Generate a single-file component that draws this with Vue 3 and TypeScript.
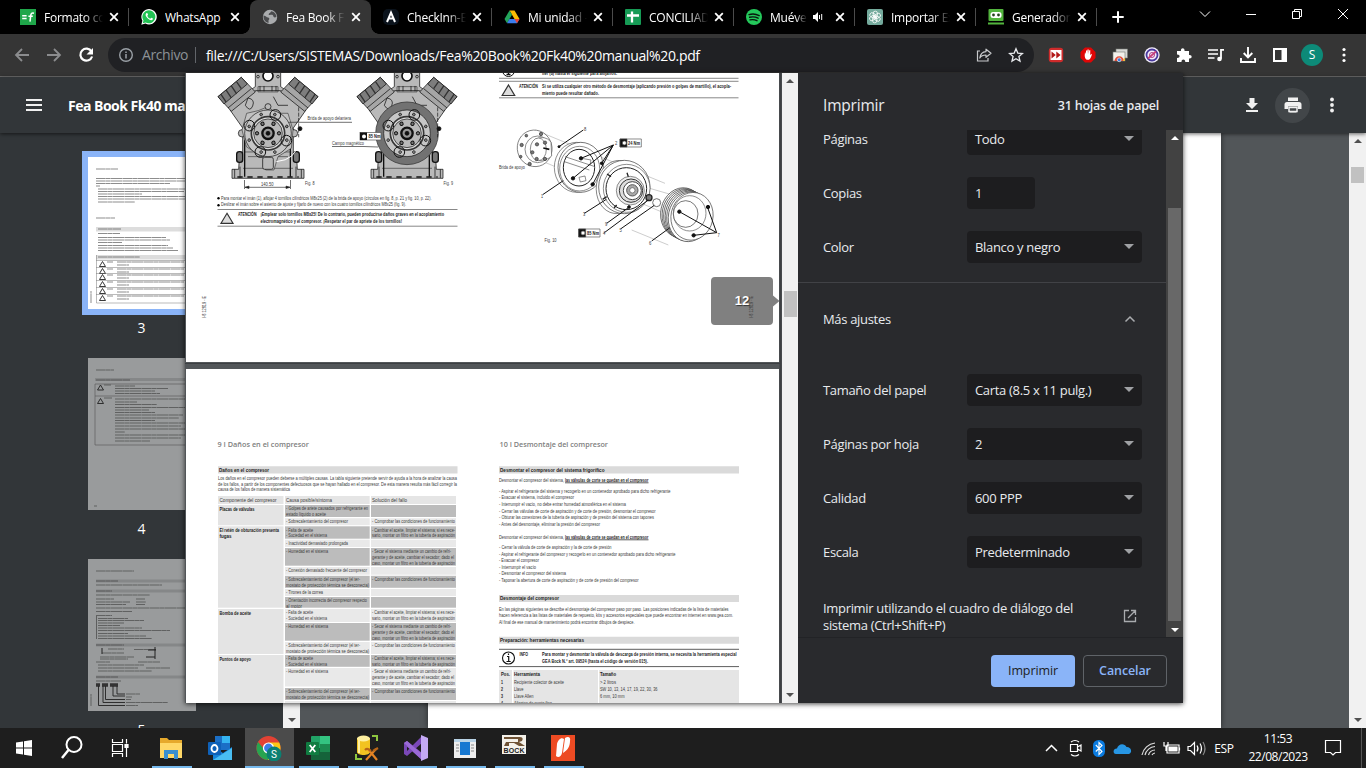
<script setup lang="ts">
interface Tab { kind: string; title: string; active?: boolean; audio?: boolean }
const tabs: Tab[] = [
  { kind: 'formato', title: 'Formato con' },
  { kind: 'whatsapp', title: 'WhatsApp' },
  { kind: 'globe', title: 'Fea Book Fk40', active: true },
  { kind: 'check', title: 'CheckInn-Ex' },
  { kind: 'drive', title: 'Mi unidad -' },
  { kind: 'sheets', title: 'CONCILIADO' },
  { kind: 'spotify', title: 'Muéveme', audio: true },
  { kind: 'gpt', title: 'Importar Exc' },
  { kind: 'robo', title: 'Generador d' },
]

interface Setting { label: string; value: string; small?: boolean }
const basic: Setting[] = [
  { label: 'Páginas', value: 'Todo' },
  { label: 'Copias', value: '1', small: true },
  { label: 'Color', value: 'Blanco y negro' },
]
const advanced: Setting[] = [
  { label: 'Tamaño del papel', value: 'Carta (8.5 x 11 pulg.)' },
  { label: 'Páginas por hoja', value: '2' },
  { label: 'Calidad', value: '600 PPP' },
  { label: 'Escala', value: 'Predeterminado' },
]

const apps = ['explorer', 'outlook', 'chrome', 'excel', 'sql', 'vs', 'window', 'bock', 'nitro']

// x, baseline, width, text, bold
type Line = [number, number, number, string, boolean?]
const upper: Line[] = [
  [307.5, 120.3, 43.5, 'Brida de apoyo delantera'],
  [332, 145, 32, 'Campo magnético'],
  [261, 186, 12.5, '140.50'],
  [305, 185, 9.5, 'Fig. 8'],
  [443.5, 185, 9.5, 'Fig. 9'],
  [221, 200, 210.5, 'Para montar el imán (1), aflojar 4 tornillos cilíndricos M8x25 (2) de la brida de apoyo (círculos en fig. 8, p. 21 y fig. 10, p. 22).'],
  [221, 206.3, 185, 'Deslizar el imán sobre el asiento de ajuste y fijarlo de nuevo con los cuatro tornillos cilíndricos M8x25 (fig. 9).'],
  [238, 216.2, 18.5, 'ATENCIÓN', true],
  [260.5, 216.2, 183.5, '¡Emplear solo tornillos M8x25! De lo contrario, pueden producirse daños graves en el acoplamiento', true],
  [260.5, 223.2, 141.5, 'electromagnético y el compresor. ¡Respetar el par de apriete de los tornillos!', true],
  [542, 75.4, 75, 'fier (8) hasta el siguiente para alojarlos.', true],
  [519, 88, 19, 'ATENCIÓN', true],
  [542, 88, 189, 'Si se utiliza cualquier otro método de desmontaje (aplicando presión o golpes de martillo), el acopla-', true],
  [542, 94.6, 57, 'miento puede resultar dañado.', true],
  [499, 169, 26, 'Brida de apoyo'],
  [544.5, 242, 12, 'Fig. 10'],
  [584, 131, 2.3, '8'], [615, 145, 2.3, '2'], [541, 198, 2, '1'], [583, 216, 2.3, '3'], [605, 226, 2.3, '9'],
  [603, 235, 2.3, '4'], [619.5, 232, 2.3, '5'], [649, 245, 2.3, '6'], [717.5, 237, 2.3, '7'],
  [628, 144.8, 12, '24 Nm', true], [587, 234.8, 12, '85 Nm', true], [368.5, 138, 12, '85 Nm', true],
]
const lower: Line[] = [
  [219, 472, 50, 'Daños en el compresor', true],
  [218, 480, 239, 'Los daños en el compresor pueden deberse a múltiples causas. La tabla siguiente pretende servir de ayuda a la hora de analizar la causa'],
  [218, 485.7, 239, 'de los fallos, a partir de los componentes defectuosos que se hayan hallado en el compresor. De esta manera resulta más fácil corregir la'],
  [218, 491, 72, 'causa de los fallos de manera sistemática'],
  [219.5, 501.9, 57, 'Componente del compresor'],
  [286, 501.9, 46, 'Causa posible/síntoma'],
  [372, 501.9, 35, 'Solución del fallo'],
  [219.5, 511, 35, 'Placas de válvulas', true],
  [219.5, 532, 59.5, 'El retén de obturación presenta', true],
  [219.5, 538, 12, 'fugas', true],
  [219.5, 615, 31.5, 'Bomba de aceite', true],
  [219.5, 661, 31.5, 'Puntos de apoyo', true],
  [500, 472, 104.5, 'Desmontar el compresor del sistema frigorífico', true],
  [499, 482, 65, 'Desmontar el compresor del sistema,'],
  [565, 482, 83.5, 'las válvulas de corte se quedan en el compresor', true],
  [499, 493, 171.5, '- Aspirar el refrigerante del sistema y recogerlo en un contenedor aprobado para dicho refrigerante'],
  [499, 499, 75, '- Evacuar el sistema, incluido el compresor'],
  [499, 506, 127, '- Interrumpir el vacío, no debe entrar humedad atmosférica en el sistema'],
  [499, 512.8, 156.5, '- Cerrar las válvulas de corte de aspiración y de corte de presión, desmontar el compresor'],
  [499, 519.3, 155, '- Obturar las conexiones de la tubería de aspiración y de presión del sistema con tapones'],
  [499, 526, 101, '- Antes del desmontaje, eliminar la presión del compresor'],
  [499, 539, 65, 'Desmontar el compresor del sistema,'],
  [565, 539, 83.5, 'las válvulas de corte se quedan en el compresor', true],
  [499, 549, 112.5, '- Cerrar la válvula de corte de aspiración y la de corte de presión'],
  [499, 556, 176.5, '- Aspirar el refrigerante del compresor y recogerlo en un contenedor aprobado para dicho refrigerante'],
  [499, 562, 40, '- Evacuar el compresor'],
  [499, 568.7, 37, '- Interrumpir el vacío'],
  [499, 575, 67, '- Desmontar el compresor del sistema'],
  [499, 582, 139.5, '- Taponar la abertura de corte de aspiración y de corte de presión del compresor'],
  [500, 600, 59, 'Desmontaje del compresor', true],
  [499, 611, 229.5, 'En las páginas siguientes se describe el desmontaje del compresor paso por paso. Las posiciones indicadas de la lista de materiales'],
  [499, 617.3, 234, 'hacen referencia a las listas de materiales de repuesto, kits y accesorios especiales que puede encontrar en internet en www.gea.com.'],
  [499, 624, 135.5, 'Al final de ese manual de mantenimiento podrá encontrar dibujos de despiece.'],
  [500, 642, 84, 'Preparación: herramientas necesarias', true],
  [519.5, 656, 8.5, 'INFO', true],
  [542, 656, 194.5, 'Para montar y desmontar la válvula de descarga de presión interna, se necesita la herramienta especial', true],
  [542, 663, 106, 'GEA Bock N.° art. 09524 (hasta el código de versión 015).', true],
  [501, 676, 9, 'Pos.', true],
  [514, 676, 26, 'Herramienta', true],
  [600, 676, 16, 'Tamaño', true],
  [501, 684, 2, '1', true], [514, 684, 50, 'Recipiente colector de aceite'], [600, 684, 16, '> 2 litros'],
  [501, 691, 2, '2', true], [514, 691, 9.5, 'Llave'], [600, 691, 57.5, 'SW 10, 13, 14, 17, 19, 22, 30, 36'],
  [501, 698, 2, '3', true], [514, 698, 19.5, 'Llave Allen'], [600, 698, 24.5, '6 mm, 10 mm'],
  [501, 705, 2, '4', true], [514, 705, 38, 'Alicates de punta fina'],
]
const groups: [number, number][] = [[505, 20.3], [526.3, 81.4], [609, 45], [655, 48]]
// lines of a table cell: text and printed width
type Cell = [string, number][]
const cambiar: Cell = [['- Cambiar el aceite, limpiar el sistema; si es nece-', 83], ['sario, montar un filtro en la tubería de aspiración', 83]]
const secar: Cell = [['- Secar el sistema mediante un cambio de refri-', 79], ['gerante y de aceite, cambiar el secador; dado el', 82], ['caso, montar un filtro en la tubería de aspiración', 83]]
const comprobar: Cell = [['- Comprobar las condiciones de funcionamiento', 83]]
const falta: Cell = [['- Falta de aceite', 27], ['- Suciedad en el sistema', 41]]
const humedad: Cell = [['- Humedad en el sistema', 42]]
const sobre2: Cell = [['- Sobrecalentamiento del compresor (el ter-', 74], ['mostato de protección térmica se desconecta)', 83]]
const rows: { y: number; h: number; dark: boolean; cause: Cell; fix: Cell }[] = [
  { y: 505, h: 12, dark: true, cause: [['- Golpes de ariete causados por refrigerante en', 82], ['estado líquido o aceite', 40]], fix: [] },
  { y: 518.2, h: 7, dark: false, cause: [['- Sobrecalentamiento del compresor', 62]], fix: comprobar },
  { y: 526.3, h: 12.4, dark: true, cause: falta, fix: cambiar },
  { y: 539.7, h: 7.3, dark: false, cause: [['- Inactividad demasiado prolongada', 62]], fix: [] },
  { y: 548, h: 17.7, dark: true, cause: humedad, fix: secar },
  { y: 567, h: 7.7, dark: false, cause: [['- Conexión demasiado frecuente del compresor', 81]], fix: [] },
  { y: 575.8, h: 12, dark: true, cause: sobre2, fix: comprobar },
  { y: 589, h: 7, dark: false, cause: [['- Tirones de la correa', 37]], fix: [] },
  { y: 597, h: 10.7, dark: true, cause: [['- Orientación incorrecta del compresor respecto', 81], ['al motor', 16]], fix: [] },
  { y: 609, h: 13, dark: false, cause: falta, fix: cambiar },
  { y: 623, h: 17.7, dark: true, cause: humedad, fix: secar },
  { y: 642, h: 12, dark: false, cause: sobre2, fix: comprobar },
  { y: 655, h: 11.8, dark: true, cause: falta, fix: cambiar },
  { y: 668, h: 18.5, dark: false, cause: humedad, fix: secar },
  { y: 688, h: 12, dark: true, cause: sobre2, fix: comprobar },
  { y: 701, h: 2, dark: false, cause: [], fix: [] },
]
const bolts = [0, 60, 120, 180, 240, 300]
const ringHoles = [20, 70, 110, 160, 200, 250, 290, 340]

// x, y, length of each printed line in the page thumbnails
type Rule = [number, number, number]
const thumb3: Rule[] = [
  [8, 12, 22], [8, 21.5, 95], [8, 24, 96], [8, 26.5, 74], [8, 29, 4], [10, 32, 92], [10, 34.5, 86], [10, 37, 44], [10, 39.5, 90], [10, 42, 88], [10, 45, 37],
  [8, 61, 19], [10, 72, 23], [10, 76.5, 22], [10, 80.5, 68], [10, 83, 72], [10, 85.5, 24], [10, 88.5, 70], [10, 91, 75], [10, 93.5, 80], [10, 100, 42],
]
const warn3 = [105, 112, 118, 125, 132, 139]
const thumb4: Rule[] = [[8, 12, 18], [8, 22, 34], [27, 28, 20], [27, 30.5, 53], [27, 33, 40], [27, 35.5, 45], [27, 41, 70], [27, 44, 22], [27, 46.5, 42], [27, 49.5, 70], [27, 52, 34], [27, 54.5, 40], [27, 57, 68], [27, 60, 64], [27, 62.5, 40], [27, 65, 70], [27, 68, 66], [27, 71, 70], [27, 74, 10], [27, 77, 70], [27, 80, 66], [27, 83, 35]]
const thumb5: Rule[] = [[8, 12, 38], [8, 22, 22], [8, 26, 66], [8, 32, 16], [8, 36, 54], [8, 40, 18], [8, 43, 34], [8, 45.5, 30], [48, 40, 9], [48, 43, 10], [48, 45.5, 9], [8, 49, 98], [8, 52.5, 36], [8, 56.5, 16], [10, 59.5, 30], [10, 61.5, 46], [10, 64, 26], [10, 66.5, 22], [10, 69, 44], [10, 71.5, 72], [10, 74.5, 30], [10, 77, 48], [10, 79.5, 54], [8, 86, 28], [20, 90, 16], [46, 90.5, 22], [14, 94, 22], [12, 98, 34], [12, 100, 28], [8, 103, 14], [50, 103, 22], [10, 106, 46], [10, 109, 40], [58, 109, 24], [10, 112, 54], [8, 118, 22], [8, 122, 25]]
</script>

<template>
  <div class="screen">
    <header class="tabstrip">
      <div v-for="t in tabs" :key="t.kind" class="tab" :class="{ active: t.active }">
        <svg class="fav" viewBox="0 0 16 16">
          <template v-if="t.kind === 'formato'">
            <rect width="16" height="16" fill="#1fa64a" />
            <path d="M2.200 6.800h4.400M2.200 9.600h4.400M14 4.200c-2.200-.6-3 .4-3.200 2L10 12.600M8.400 7.300h4.400" stroke="#fff" stroke-width="1.500" fill="none" />
          </template>
          <template v-else-if="t.kind === 'whatsapp'">
            <path d="M.3 15.700 1.400 11.700A7.700 7.700 0 1 1 4.400 14.600z" fill="#fff" />
            <path d="M1.700 14.300l.8-2.800a6.500 6.500 0 1 1 2.200 2z" fill="#22c354" />
            <path d="M5.300 4.200c-1.200 1-.8 3 1.300 5.100s4.100 2.500 5.100 1.300c.4-.7.300-1-.2-1.300l-1.300-.6-.9 1c-1.400-.5-2.500-1.500-3-3l.8-.9-.6-1.400c-.3-.5-.8-.4-1.200-.2z" fill="#fff" />
          </template>
          <template v-else-if="t.kind === 'globe'">
            <circle cx="8" cy="8" r="7.200" fill="#a9abad" />
            <path d="M1.600 6.500c2.400.3 2.600 1.800 4.500 2 1.700.3 1.500 2 .4 2.700v2.700C3 13.500 1 9.800 1.600 6.500zM9 2.200c-.2 2-2.500 1.600-2.300 3.500 1.400.7 2.800-.5 4 .4 1 .9.300 2.200 1.900 2.300.8 0 1.300-.5 1.800-.5C14.300 4.500 12 2.500 9 2.200z" fill="#4a4b4d" />
          </template>
          <template v-else-if="t.kind === 'check'">
            <rect width="16" height="16" rx="5" fill="#0b131c" />
            <path d="M4 13 8 3.500l4 9.500M6 9.500h4" stroke="#fff" stroke-width="2" fill="none" />
          </template>
          <template v-else-if="t.kind === 'drive'">
            <path d="M5.500 1.500h5L15.500 10h-5z" fill="#fbbc04" />
            <path d="M5.500 1.500 8 5.700 3 14.300.5 10z" fill="#24a55b" />
            <path d="M5.400 10h10.100L13 14.300H3z" fill="#3b7ded" />
            <path d="m10.500 10 5 0-2.500 4.300z" fill="#e94335" />
          </template>
          <template v-else-if="t.kind === 'sheets'">
            <rect width="16" height="16" rx="1" fill="#169b55" />
            <path d="M2 6.500h12M7 2.500v11" stroke="#fff" stroke-width="2.300" />
          </template>
          <template v-else-if="t.kind === 'spotify'">
            <circle cx="8" cy="8" r="8" fill="#24c85b" />
            <path d="M3 5.600c3.500-1 7-.7 10.200 1M3.600 8.300c3-.8 5.800-.5 8.500.9M4 10.900c2.500-.6 4.800-.3 7 .8" stroke="#08170d" stroke-width="1.400" stroke-linecap="round" fill="none" />
          </template>
          <template v-else-if="t.kind === 'gpt'">
            <rect width="16" height="16" rx="2" fill="#74aa9c" />
            <g fill="none" stroke="#fff" stroke-width=".8">
              <rect v-for="a in bolts" :key="a" x="6.200" y="2.200" width="4.200" height="6.500" rx="2" :transform="`rotate(${a} 8 8)`" />
            </g>
          </template>
          <template v-else>
            <rect x=".5" y="0" width="15" height="12" rx="1" fill="#52b43d" />
            <rect x="2.500" y="3" width="11" height="6" rx="2.500" fill="#fff" />
            <circle cx="5.500" cy="6" r="1.400" fill="#26421f" /><circle cx="10.500" cy="6" r="1.400" fill="#26421f" />
            <path d="M0 14.500h16" stroke="#52b43d" stroke-width="2" />
          </template>
        </svg>
        <span class="ttl">{{ t.title }}</span>
        <svg v-if="t.audio" class="audio" viewBox="0 0 12 12"><path d="M1 4h2l3-3v10L3 8H1z" fill="#fff" /><path d="M7.500 4v4M9.700 3v6" stroke="#fff" /></svg>
        <svg class="close" viewBox="0 0 10 10"><path d="m1.200 1.200 7.600 7.600M8.800 1.200 1.200 8.800" stroke="#fff" stroke-width="1.800" /></svg>
      </div>
      <svg class="plus" viewBox="0 0 12 12"><path d="M6 .3v11.400M.3 6h11.400" stroke="#fff" stroke-width="2" /></svg>
      <svg class="winctl" viewBox="0 0 184 34" fill="none" stroke="#fff">
        <path d="m18 11.500 5 5 5-5M64 14.500h10M110.500 11.500h7v7h-7zM112.500 11.500v-2h7v7h-2M156 9l10 10M166 9l-10 10" />
      </svg>
    </header>

    <div class="toolbar">
      <svg class="nav" viewBox="0 0 100 34" fill="none">
        <path d="M29 17H16.500M22 11l-6 6 6 6M47 17h12.500M54 11l6 6-6 6" stroke="#8b8c8e" stroke-width="1.800" />
        <path d="M91.500 13.500a6 6 0 1 0 .6 5" stroke="#fff" stroke-width="2.200" /><path d="M93 10v6.500h-6.500z" fill="#fff" />
      </svg>
      <div class="omnibox">
        <svg class="i16" viewBox="0 0 16 16"><circle cx="8" cy="8" r="6.300" fill="none" stroke="#9aa0a6" stroke-width="1.400" /><path d="M8 7v4.500M8 4.400v1.500" stroke="#9aa0a6" stroke-width="1.500" /></svg>
        <span class="scheme">Archivo</span>
        <span class="url">file:///C:/Users/SISTEMAS/Downloads/Fea%20Book%20Fk40%20manual%20.pdf</span>
        <svg class="i16 share" viewBox="0 0 16 16" fill="none" stroke="#c8cacc" stroke-width="1.200"><path d="M4 4H1.500v10h10.500v-3" /><path d="M10 2.200 15 6.300l-5 4V8C7 8 5 9 3.800 11 4.300 7.500 6.500 4.800 10 4.600z" stroke-linejoin="round" /></svg>
        <svg class="i16" viewBox="0 0 16 16"><path d="m8 1.800 1.800 4.300 4.700.4-3.600 3 1.100 4.600L8 11.700l-4 2.400 1.100-4.600-3.600-3 4.700-.4z" fill="none" stroke="#e8eaed" stroke-width="1.300" /></svg>
      </div>
      <div class="exts">
        <svg viewBox="0 0 16 16"><rect x=".8" y=".8" width="14.400" height="14.400" rx="3" fill="#cf2b2b" /><rect x="2.500" y="3" width="11" height="10" fill="#fff" /><path d="m3.500 4.500 4.300 3.500-4.300 3.500zM8.300 4.500l4.300 3.500-4.300 3.500z" fill="#b31919" /></svg>
        <svg viewBox="0 0 16 16"><path d="M5 .5h6L15.500 5v6L11 15.500H5L.5 11V5z" fill="#e00606" /><path d="M4.700 8.500 5 5l1 2V3.500h1.200V7l.3-4.500h1.200V7l.5-3.800h1.100L10.200 8l1.500-1.300c.7.300-1.300 5.500-2.700 6H6.700c-1.400-.7-2-2.500-2-4.200z" fill="#fff" /></svg>
        <svg viewBox="0 0 16 16"><rect x="4" y="2" width="11.500" height="9" fill="#d9dad7" stroke="#767873" stroke-width=".6" /><rect x="1" y="5" width="12" height="9" fill="#f2f1ec" stroke="#767873" stroke-width=".6" /><path d="M2.500 14a4.700 4.700 0 0 1 9.400 0z" fill="#e2503d" /><circle cx="7.200" cy="12.800" r="1.900" fill="#387cdf" stroke="#fff" stroke-width=".6" /><path d="M11 14c0-2 1-3 2-3v3z" fill="#eebe37" /></svg>
        <svg viewBox="0 0 16 16"><circle cx="8" cy="8" r="7.700" fill="#f3eefb" /><circle cx="8" cy="8" r="5.500" fill="none" stroke="#49399e" stroke-width="1.800" /><path d="m4 11.500 8-7" stroke="#cc4179" stroke-width="1.800" /><circle cx="8" cy="8" r="2.500" fill="none" stroke="#ae3e86" /></svg>
        <svg viewBox="0 0 16 16"><path d="M1 4h4c-.8-3.700 4.200-3.700 3.500 0H13v4c3.500-.6 3.500 4 0 3.400V15H9.200c.4-3.500-4-3.500-3.700 0H1v-4c3.400.2 3.400-3.700 0-3.400z" fill="#fff" /></svg>
        <svg viewBox="0 0 16 16"><path d="M0 3h10M0 7h10M0 11h6.500" stroke="#fff" stroke-width="1.700" /><path d="M16 2.800h-3v9" stroke="#fff" stroke-width="1.800" fill="none" /><circle cx="11.500" cy="12" r="2.300" fill="#fff" /></svg>
        <svg viewBox="0 0 16 16" fill="none" stroke="#fff" stroke-width="1.900"><path d="M8 0v10M3.700 6 8 10.300 12.300 6M1 11v4h14v-4" /></svg>
        <svg viewBox="0 0 16 16"><path d="M2 2h12v12H2z" fill="none" stroke="#fff" stroke-width="2" /><path d="M9.500 2H14v12H9.500z" fill="#fff" /></svg>
      </div>
      <span class="avatar">S</span>
      <svg class="dots" viewBox="0 0 4 16" fill="#fff"><circle cx="2" cy="2.500" r="1.600" /><circle cx="2" cy="8" r="1.600" /><circle cx="2" cy="13.500" r="1.600" /></svg>
    </div>

    <main class="viewer">
      <div class="pdfbar">
        <svg class="i16" viewBox="0 0 16 16"><path d="M0 3h16M0 8h16M0 13h16" stroke="#f1f1f1" stroke-width="2" /></svg>
        <span class="pdfname">Fea Book Fk40 manual</span>
        <span class="grow"></span>
        <svg class="i16" viewBox="0 0 16 16" fill="#f1f1f1"><path d="M5.500 1h5v5H14l-6 6-6-6h3.500zM2 13h12v2H2z" /></svg>
        <span class="disc"><svg viewBox="0 0 18 18" fill="#f1f1f1"><path d="M4 1.500h10V5H4zM3 6h12a2.500 2.500 0 0 1 2.500 2.500V13H14v-2.500H4V13H.5V8.500A2.500 2.500 0 0 1 3 6zM5.500 11.500h7v5h-7z" /><path d="M5 11.500h8v4H5z" fill="#424649" stroke="#f1f1f1" stroke-width="1.500" /></svg></span>
        <svg class="dots" viewBox="0 0 4 16" fill="#f1f1f1"><circle cx="2" cy="2.500" r="1.900" /><circle cx="2" cy="8" r="1.900" /><circle cx="2" cy="13.500" r="1.900" /></svg>
      </div>
      <div class="pdfbody">
        <aside class="thumbs">
          <div class="thumb sel">
            <svg viewBox="0 0 108 152">
              <rect x="8" y="70" width="96" height="4.500" fill="#ddd" /><rect x="8" y="98" width="96" height="4.500" fill="#ddd" />
              <path v-for="(r, i) in thumb3" :key="i" class="ink" :d="`M${r[0]} ${r[1]}h${r[2]}`" />
              <g v-for="y in warn3" :key="y"><path class="ink" :d="`M19 ${y}h6M29 ${y}h67M29 ${y + 3}h12`" /><path :d="`M8 ${y - 1.5}h92`" stroke="#777" stroke-width=".5" /><path :d="`M14.500 ${y - .5}l3 5h-6z`" fill="none" stroke="#222" stroke-width=".9" /></g>
              <path d="M8.500 98v48h92" fill="none" stroke="#777" stroke-width=".5" /><path class="ink" d="M3 146v-12" />
            </svg>
          </div>
          <span class="pg">3</span>
          <div class="thumb">
            <svg viewBox="0 0 108 152">
              <path d="M7 20h94v3H7z" fill="#858788" /><path d="M7 26h94M7 38h94M7 87h94M7 26v61" stroke="#555" stroke-width=".6" fill="none" />
              <path v-for="(r, i) in thumb4" :key="i" class="ink" :d="`M${r[0]} ${r[1]}h${r[2]}`" />
              <path d="m12.500 27 3 5h-6zM12.500 40.500l3 5h-6z" fill="none" stroke="#222" stroke-width=".9" /><path class="ink" d="M16 27h7M16 40h8M6 148h3" />
            </svg>
          </div>
          <span class="pg">4</span>
          <div class="thumb">
            <svg viewBox="0 0 108 152">
              <path d="M8 20.500h92v3H8zM8 30.500h92v3H8zM8 84.500h92v3H8zM8 116.500h92v3H8z" fill="#858788" />
              <path v-for="(r, i) in thumb5" :key="i" class="ink" :d="`M${r[0]} ${r[1]}h${r[2]}`" />
              <path d="M67 88v12M60 91h8M58 98h9M14 89v6" stroke="#222" fill="none" /><path d="M8.500 57v23" stroke="#444" stroke-width=".7" />
              <path d="M8 126h4M14 126h6M22 126h8" stroke="#333" stroke-width="3.500" />
              <path d="M10.500 127v19.500H37M15 127v16.500h22M17.500 127v13.500H37M25 127v10h12M29 127v8h8" stroke="#222" stroke-width=".9" fill="none" />
              <path class="ink" d="M38 135h14M38 138h6M38 140.500h5M38 143.500h42M38 146.500h12M3 147v-12" />
            </svg>
          </div>
          <span class="pg">5</span>
        </aside>
        <div class="sb left"><i class="down"></i></div>
        <div class="canvas"><div class="sheet"></div></div>
        <div class="sb right"><i class="up"></i><b></b><span class="grow"></span><i class="down"></i></div>
      </div>
    </main>

    <footer class="taskbar">
      <div class="sys"><svg viewBox="0 0 18 18" fill="#fff"><path d="M1 3.500 8 2.500v6H1zM9 2.300 17 1v7.500H9zM1 9.500h7v6L1 14.600zM9 9.500h8V17l-8-1.200z" /></svg></div>
      <div class="sys"><svg class="big" viewBox="0 0 24 24" fill="none" stroke="#fff"><circle cx="14" cy="8.500" r="7.500" stroke-width="2" /><path d="M8.500 14 2 22" stroke-width="2.500" /></svg></div>
      <div class="sys last"><svg viewBox="0 0 18 18" fill="none" stroke="#fff" stroke-width="1.200"><path d="M1.500 0v3.500h10V0M1.500 18v-3.500h10V18M1.500 5.500h10v7h-10zM15.500 0v4.500M15.500 9v9" /><path d="M14 5.500h3v3h-3z" fill="#fff" /></svg></div>
      <div v-for="a in apps" :key="a" class="app" :class="{ current: a === 'chrome', run: a !== 'outlook' }">
        <svg viewBox="0 0 26 26">
          <template v-if="a === 'explorer'"><path d="M2 3h7l2 2h13v18H2z" fill="#e6a92c" /><path d="M2 8h22v15H2z" fill="#ffd868" /><path d="M6 24v-9h14v9h-4v-5h-6v5z" fill="#3a8fd0" /></template>
          <template v-else-if="a === 'outlook'"><rect x="8" y="1" width="15" height="14" fill="#1b6fc6" /><path d="M15 1h8v7h-8z" fill="#35b4f1" /><path d="M6 12l10 6 9-6v13H6z" fill="#1683d8" /><path d="m6 25 19-12v12z" fill="#49bdf2" /><rect x="1" y="7" width="13" height="13" rx="1" fill="#0f61b8" /><ellipse cx="7.500" cy="13.500" rx="3" ry="3.500" fill="none" stroke="#fff" stroke-width="1.800" /></template>
          <template v-else-if="a === 'chrome'"><circle cx="12.500" cy="13" r="12" fill="#e24234" /><path d="M2.100 7A12 12 0 0 0 12 25l5.500-9.500-10-2z" fill="#27a450" /><path d="M12.500 7.500h10.700A12 12 0 0 1 12 25l5.500-9.500z" fill="#fbc717" /><circle cx="12.500" cy="13" r="5.600" fill="#fff" /><circle cx="12.500" cy="13" r="4.400" fill="#3b7de8" /><circle cx="18" cy="19" r="7.500" fill="#0b8072" /><text x="18" y="22.600" text-anchor="middle" class="bs">S</text></template>
          <template v-else-if="a === 'excel'"><rect x="6" y="1" width="19" height="24" rx="1" fill="#21a366" /><path d="M15 1h10v8H15z" fill="#34c481" /><path d="M6 13h19v12H6z" fill="#15633a" /><path d="M15 9h10v8H15z" fill="#1c8a50" /><rect x="1" y="7" width="13" height="13" rx="1" fill="#107c41" /><path d="m4.700 10 5.600 7M10.300 10l-5.600 7" stroke="#fff" stroke-width="1.800" /></template>
          <template v-else-if="a === 'sql'"><path d="M3 3v14c0 4 13 4 13 0V3z" fill="#f2c321" /><ellipse cx="9.500" cy="3.500" rx="6.500" ry="3" fill="#fff0a0" /><path d="M5 5v13" stroke="#fff0a0" stroke-width="2" /><path d="M18 1h5v5M2 19v5h6" fill="none" stroke="#8dc63f" stroke-width="2" /><path d="m12 25 10-11M14 14l9 11" stroke="#e58424" stroke-width="2.200" /><path d="M11 15c2-2 4-1 6 1M19 16l5-3" stroke="#b86618" stroke-width="2.200" fill="none" /></template>
          <template v-else-if="a === 'vs'"><path d="m1 8 3-2 15 12v7L1 9z" fill="#8c57c8" /><path d="M1 8v11l3 2 15-13V1L4 16V9z" fill="#7a48b8" /><path d="m1 8 3-2 15 13v6z" fill="#9a6ad6" /><path d="m18 0 7 3v20l-7 3z" fill="#c4a9f4" /></template>
          <template v-else-if="a === 'window'"><rect x="2" y="4" width="22" height="19" fill="#eee" /><path d="M2 4h22v3H2z" fill="#b9d3e6" /><rect x="8" y="7" width="10" height="13" fill="#1778d1" /><path d="M4 10h3M4 13h3M4 16h3M19 10h3M19 13h3M19 16h3" stroke="#888" /></template>
          <template v-else-if="a === 'bock'"><rect x="1" y="0" width="24" height="19" fill="#f4f1ea" /><path d="M3 2h16q4 0 2 4l-3 1 6 4h-6l-5-3H8v3H3l2-4h12V4H3z" fill="#6f5234" /><text x="2.500" y="17.800" textLength="21" class="bk">BOCK</text></template>
          <template v-else><rect x="1" y="0" width="24" height="26" fill="#ed4b23" /><path d="M7 9c1-4 4-7 7-5l-2 14c-1 4-4 5-6 3zM15 3c3-2 6-1 5 3 0 5-2 9-7 12z" fill="#fff" /></template>
        </svg>
      </div>
      <span class="grow"></span>
      <svg class="tray" viewBox="0 0 172 28" fill="none" stroke="#fff" stroke-width="1.200">
        <path d="m6 17 5.500-5.500L17 17" stroke-width="1.500" />
        <path d="M30.500 10.500h7v7h-7zM37.500 13l3.500-2v6l-3.500-2M31 8q4-3 8 0M31 20.500q4 3 8 0" />
        <rect x="53" y="6" width="12" height="17" rx="5.500" fill="#0a7be0" stroke="none" /><path d="m55.800 11 6.200 6.500-3 3V8.500l3 3-6.200 6" stroke-width="1.100" />
        <path d="M76 20c-4-.6-2.500-6 1-5.500 1-5 7.500-6 9.500-1.500 4.500-.5 6.500 5.500 2.500 7z" fill="#2796e4" stroke="none" />
        <path d="M102 21A15 15 0 0 1 115 9M105 21a11 11 0 0 1 10-8.500M108.500 21a7 7 0 0 1 6.500-5M112 21a3.500 3.500 0 0 1 3-2" stroke="#ddd" />
        <path d="M127 11h12v8h-12zM139.500 13.500v3M124 8v4h4V8M126 12v5" /><path d="M129 13h8v4h-8z" fill="#fff" />
        <path d="M148 12.500h2.500l4-4v12l-4-4H148zM157 11.500q2 3 0 6M160 9.500q3 5 0 10" /><path d="M163 8q4 6.500 0 13" stroke="#888" />
      </svg>
      <span class="lang">ESP</span>
      <div class="clock"><span>11:53</span><span>22/08/2023</span></div>
      <svg class="note" viewBox="0 0 18 18"><path d="M1.500 1.500h15v12h-5L9 16l-2.500-2.500h-5z" fill="none" stroke="#fff" stroke-width="1.200" /></svg>
      <span class="peek"></span>
    </footer>

    <section class="dialog">
      <div class="preview">
        <svg class="pages" viewBox="185 73 597 630">
          <rect x="185" y="73" width="597" height="630" fill="#525659" />
          <rect x="186" y="60" width="593" height="302" fill="#fff" /><rect x="186" y="369" width="593" height="340" fill="#fff" />
          <path d="M185 363.500h595" stroke="#3c3f42" /><path d="M780.500 73v630" stroke="#3d3f42" stroke-width="2" />

          <g v-for="cx in [268, 407]" :key="cx" :transform="`translate(${cx} 133.3) scale(.33333)`" stroke="#111" stroke-width="2.200" fill="#b9b9b9">
            <path d="M-38-190h76v50l14 10-14 16h-76l-14-16 14-10z" />
            <path d="M-36-128h72l24 8 54 50-38 54v76l10 14 2 34h20v27h-216v-27h20l2-34 10-14v-76l-38-54 54-50z" />
            <path d="m-150-110 70-58 42 44-72 58zM150-110l-70-58-42 44 72 58z" fill="#a6a6a6" />
            <path d="m-150-110 18 22 70-60-18-20zM150-110l-18 22-70-60 18-20z" fill="#7d7d7d" />
            <path d="m-142-118 16 24m0-36 16 24m0-36 16 24m0-36 14 20M142-118l-16 24m0-36-16 24m0-36-16 24m0-36-14 20" stroke-width="4" stroke="#333" fill="none" />
            <path d="m-120-76 70-58M120-76l-70-58M-60-106q22 4 14 24t-22-2zM60-84h-30l-14-26" fill="none" />
            <path d="M-30-140h60v16h-60zM-70 56h140M-60 70h120M-75 105h150" fill="none" stroke-width="1.500" />
            <circle r="15" cy="-172" fill="#fff" stroke-width="5" /><circle r="4" cx="-30" cy="-170" /><circle r="4" cx="30" cy="-170" />
            <path d="M-12-142v16M12-142v16M-24-142v16M24-142v16" />
            <circle cx="-78" r="11" /><circle cx="78" r="11" />
            <rect x="-94" y="55" width="18" height="32" rx="8" fill="#777" stroke-width="4" /><rect x="76" y="55" width="18" height="32" rx="8" fill="#777" stroke-width="4" />
            <path d="M-70 20v110M67 20v110" stroke-width="4" /><path d="M-92 131h184" stroke-width="4" stroke-dasharray="16 14" />
            <path d="M-100 108v26M100 108v26M-84 100v34M84 100v34" />
            <circle v-if="cx === 407" r="94" fill="#727272" stroke="#333" />
            <path v-else d="M0-80 25-60h35l15 50-5 55-40 25-12 40h-25L-15 73l-50-33-13-50 14-50 35-8z" fill="#c2c2c2" stroke-width="1.500" />
            <circle r="70" fill="#c6c6c6" stroke-width="2" />
            <circle r="50" stroke-width="5" stroke="#373737" fill="#ddd" /><circle r="43" stroke-width="2" />
            <circle v-for="a in bolts" :key="a" r="5" cx="33" :transform="`rotate(${a})`" fill="#777" stroke-width="3" />
            <circle v-for="a in ringHoles" :key="'h' + a" r="4" cx="60" :transform="`rotate(${a})`" fill="#888" />
            <circle r="17" fill="#999" stroke-width="7" /><circle r="6" fill="#111" />
            <g fill="none" stroke-width="3"><circle cx="22" cy="-55" r="16" /><circle cx="-56" cy="-23" r="16" /><circle cx="55" cy="22" r="16" /><circle cx="-23" cy="56" r="16" /></g>
            <circle v-if="cx === 268" cx="0" cy="-80" r="9" /><rect v-if="cx === 268" x="-16" y="72" width="32" height="36" rx="6" />
            <path v-if="cx === 268" d="M25 85q60-5 67-60" fill="none" stroke="#fff" stroke-width="3" />
            <path d="M92-78v90" stroke-width="2" stroke-dasharray="12 4" /><circle cx="96" cy="-14" r="6" fill="#111" />
          </g>
          <g stroke="#333" stroke-width=".7" fill="none">
            <path d="M289 122.300h63M332 146.500h32l14 .5M244.500 180v9M290.500 180v9M245 187.300h45" />
            <path d="m245 187.300 4-1.200v2.400zM290 187.300l-4-1.200v2.400z" fill="#111" />
            <path d="M217.500 209.500h240M217.500 226.200h240M499 78.300h239.500M499 81.300h239.500M499 97.800h239.500" stroke="#555" />
            <path d="m227 213.300 6 10h-12z" stroke-width="1.200" fill="#ddd" /><path d="m508.500 85 6.200 10.500h-12.500z" stroke-width="1.200" fill="#ddd" />
            <circle cx="508.500" cy="70.500" r="6" stroke-width="1" stroke="#111" /><path d="M508.500 71v3.500M506.500 74.500h4" stroke="#111" stroke-width="1.300" />
          </g>
          <circle cx="218.500" cy="198.300" r="1.200" /><circle cx="218.500" cy="205.200" r="1.200" />
          <g transform="translate(485 93.333) scale(.33333)" fill="#fff" stroke="#555" stroke-width="2">
            <path d="M150 110l390 160M140 190l400 170M340 240l240 70M440 410l110 45" stroke="#999" stroke-width="1.500" fill="none" />
            <ellipse cx="149" cy="165" rx="52" ry="55" transform="rotate(-15 149 165)" />
            <ellipse cx="158" cy="168" rx="38" ry="40" /><path d="M150 138q30-14 48 8l2 42q-14 15-44 13" /><ellipse cx="160" cy="168" rx="24" ry="34" />
            <g fill="#777" stroke="#333"><circle cx="168" cy="122" r="5" /><circle cx="124" cy="127" r="4" /><circle cx="110" cy="155" r="5" /><circle cx="107" cy="190" r="4" /><circle cx="134" cy="212" r="5" /><circle cx="180" cy="148" r="5" /><circle cx="142" cy="177" r="5" /><circle cx="155" cy="197" r="5" /><circle cx="180" cy="197" r="5" /><circle cx="156" cy="153" r="5" /></g>
            <ellipse cx="275" cy="222" rx="67" ry="75" /><ellipse cx="287" cy="222" rx="68" ry="75" stroke="#333" /><ellipse cx="284" cy="226" rx="60" ry="67" /><ellipse cx="282" cy="223" rx="47" ry="55" stroke="#222" stroke-width="3" />
            <path d="m240 190 90 30M238 205l75 25M300 248l-18 4 4 14 17-4zM290 195l28 5-3 14" fill="none" />
            <ellipse cx="398" cy="281" rx="64" ry="80" transform="rotate(8 398 281)" /><ellipse cx="418" cy="281" rx="77" ry="80" stroke="#333" /><ellipse cx="425" cy="285" rx="70" ry="72" /><ellipse cx="424" cy="286" rx="61" ry="63" stroke="#222" stroke-width="3" />
            <ellipse cx="436" cy="292" rx="42" ry="43" fill="#eee" /><ellipse cx="438" cy="292" rx="35" ry="35" stroke="#333" stroke-width="3" fill="#ddd" /><circle cx="442" cy="292" r="27" stroke-width="3" stroke="#444" /><circle cx="442" cy="291" r="17" fill="#aaa" stroke-width="3" /><circle cx="442" cy="291" r="8" />
            <path d="m378 250-12-8M365 310l-12 8M430 250l-4-12M395 335l-8 9" stroke="#222" stroke-width="4" />
            <circle cx="492" cy="313" r="9" fill="#777" stroke="#222" stroke-width="4" /><circle cx="515" cy="328" r="12" fill="none" stroke-width="2.500" />
            <ellipse v-for="k in [0, 1, 2, 3, 4, 5]" :key="k" :cx="589 + k * 5" :cy="360 + k * 1.5" rx="63" ry="75" stroke="#333" transform="rotate(12 600 365)" />
            <ellipse cx="621" cy="369" rx="63" ry="72" stroke="#444" transform="rotate(12 621 369)" /><ellipse cx="614" cy="360" rx="49" ry="53" /><ellipse cx="602" cy="362" rx="37" ry="40" stroke="#333" />
            <g stroke="#111" stroke-width="3" fill="#111">
              <path d="M222 160 295 110M385 155l-97 40M385 155 264 255M385 155l-35 55M385 155l-62 118M173 304l62-42M298 360l66-42M365 390l68-49M358 418l132-98M408 406l100-70M500 443l55-40M695 418 583 355M695 418l-27-75M695 418l-69 8" />
              <circle cx="222" cy="160" r="3" /><circle cx="288" cy="195" r="5" /><circle cx="264" cy="255" r="5" /><circle cx="350" cy="210" r="4" /><circle cx="323" cy="273" r="5" /><circle cx="583" cy="355" r="5" /><circle cx="669" cy="341" r="5" /><circle cx="626" cy="426" r="5" /><circle cx="432" cy="341" r="4" />
              <path d="m175 164 18 4" stroke-width="5" />
            </g>
            <g stroke="#555"><path d="M405 137h64v24h-64zM281 407h64v24h-64z" /><path d="M405 137h21v24h-21zM281 407h21v24h-21z" fill="#111" /><circle cx="418" cy="149" r="6" /><circle cx="294" cy="419" r="6" /></g>
          </g>
          <g transform="translate(360 132.500)"><rect width="21" height="7.500" fill="#fff" stroke="#555" stroke-width=".7" /><rect width="7" height="7.500" fill="#111" /><circle cx="4" cy="4" r="2" fill="#fff" /></g>

          <path d="M218 466.300h239.500v7.200H218zM499 466.300h240v7.200H499zM499 595h240v7H499zM499 636.700h240v7H499z" fill="#dadada" />
          <path d="M218 496h65.500v8H218zM285 496h84.700v8H285zM371 496h85v8h-85z" fill="#e5e5e5" />
          <rect v-for="g in groups" :key="g[0]" x="218" :y="g[0]" width="65.500" :height="g[1]" fill="#e4e4e4" />
          <g v-for="r in rows" :key="r.y">
            <rect x="285" :y="r.y" width="84.700" :height="r.h" :fill="r.dark ? '#bcbcbc' : '#e9e9e9'" /><rect x="371" :y="r.y" width="85" :height="r.h" :fill="r.dark ? '#bcbcbc' : '#e9e9e9'" />
            <text v-for="(l, i) in r.cause" :key="'c' + i" class="doc" x="286" :y="r.y + 5.2 + i * 5.7" :textLength="l[1]" lengthAdjust="spacingAndGlyphs">{{ l[0] }}</text>
            <text v-for="(l, i) in r.fix" :key="'f' + i" class="doc" x="372" :y="r.y + 5.2 + i * 5.7" :textLength="l[1]" lengthAdjust="spacingAndGlyphs">{{ l[0] }}</text>
          </g>
          <path d="M499 670h13v33h-13zM513.500 670H598v33h-84.500zM599 670h140v33H599z" fill="#e5e5e5" />
          <path d="M499 649.300h240M499 666.600h240M565 482.800h83.500M565 539.800h83.500" stroke="#333" stroke-width=".8" />
          <circle cx="508.500" cy="658" r="6" fill="none" stroke="#111" stroke-width="1.100" /><path d="M507 656.500h1.700v5M506.500 661.500h4.200M508.500 653.500v1.500" stroke="#111" stroke-width="1.200" fill="none" />
          <text v-for="(l, i) in upper" :key="'u' + i" class="doc" :class="{ b: l[4] }" :x="l[0]" :y="l[1]" :textLength="l[2]" lengthAdjust="spacingAndGlyphs">{{ l[3] }}</text>
          <text v-for="(l, i) in lower" :key="'l' + i" class="doc" :class="{ b: l[4] }" :x="l[0]" :y="l[1]" :textLength="l[2]" lengthAdjust="spacingAndGlyphs">{{ l[3] }}</text>
          <text class="head" x="217.500" y="447" textLength="91.500" lengthAdjust="spacingAndGlyphs">9 I Daños en el compresor</text>
          <text class="head" x="499.500" y="447" textLength="108.500" lengthAdjust="spacingAndGlyphs">10 I Desmontaje del compresor</text>
          <text class="doc" transform="translate(206 318) rotate(-90)" textLength="22" lengthAdjust="spacingAndGlyphs">I-8 12819 - E</text>
          <path d="M715 277h54a4 4 0 0 1 4 4v14.500l6.500 5.500-6.500 5.500V321a4 4 0 0 1-4 4h-54a4 4 0 0 1-4-4v-40a4 4 0 0 1 4-4z" fill="#808080" />
          <text class="doc" transform="translate(753 318) rotate(-90)" textLength="22" lengthAdjust="spacingAndGlyphs">I-8 12819 - E</text>
          <text x="742" y="305.300" text-anchor="middle" class="pn">12</text>
        </svg>
        <div class="sb prev"><i class="up"></i><b></b><span class="grow"></span><i class="down"></i></div>
      </div>

      <div class="panel">
        <div class="phead"><span class="ptitle">Imprimir</span><span class="count">31 hojas de papel</span></div>
        <div class="pbody">
          <div class="settings">
            <div class="group first">
              <div v-for="s in basic" :key="s.label" class="row">
                <span class="lbl">{{ s.label }}</span><span class="field" :class="{ small: s.small }">{{ s.value }}<i v-if="!s.small"></i></span>
              </div>
            </div>
            <div class="more"><span>Más ajustes</span><svg viewBox="0 0 12 12"><path d="m1.500 8.500 4.500-4.500 4.500 4.500" fill="none" stroke="#a9abae" stroke-width="1.500" /></svg></div>
            <div class="group">
              <div v-for="s in advanced" :key="s.label" class="row">
                <span class="lbl">{{ s.label }}</span><span class="field">{{ s.value }}<i></i></span>
              </div>
            </div>
            <div class="system"><span>Imprimir utilizando el cuadro de diálogo del<br>sistema (Ctrl+Shift+P)</span><svg viewBox="0 0 14 14"><path d="M6 1.500H1.500v11h11V8M8 1.500h4.500V6M12.500 1.500 5 9" fill="none" stroke="#a9abae" stroke-width="1.300" /></svg></div>
          </div>
          <div class="psb"><i class="up"></i><b></b><i class="down"></i></div>
        </div>
        <div class="pfoot"><button class="go">Imprimir</button><button class="cancel">Cancelar</button></div>
      </div>
    </section>
  </div>
</template>

<style>
html, body { margin: 0; overflow: hidden; background: #000; }
</style>
<style scoped>
* { box-sizing: border-box; }
.screen { width: 1366px; height: 768px; position: relative; display: flex; flex-direction: column; overflow: hidden; font: 13px "Open Sans", "Noto Sans", sans-serif; color: #fff; }
svg { display: block; flex: none; }
.grow { flex: 1; }
.tabstrip { height: 34px; flex: none; background: #000; display: flex; align-items: center; padding-left: 8px; }
.tab { width: 121px; height: 34px; display: flex; align-items: center; padding-left: 12px; flex: none; position: relative; }
.tab:not(.active)::after { content: ""; position: absolute; right: 0; top: 8px; width: 1px; height: 18px; background: #4b4b4b; }
.tab:nth-child(2)::after { display: none; }
.tab.active { background: #353535; border-radius: 8px 8px 0 0; }
.tab.active::before, .tab.active::after { content: ""; position: absolute; bottom: 0; width: 8px; height: 8px; }
.tab.active::before { left: -8px; background: radial-gradient(circle at 0 0, transparent 7.5px, #353535 8px); }
.tab.active::after { right: -8px; background: radial-gradient(circle at 100% 0, transparent 7.5px, #353535 8px); }
.fav { width: 16px; height: 16px; margin-right: 8px; }
.ttl { width: 59px; overflow: hidden; white-space: nowrap; font-size: 12px; letter-spacing: -.25px; flex: none; -webkit-mask-image: linear-gradient(90deg, #000 68%, transparent 100%); mask-image: linear-gradient(90deg, #000 68%, transparent 100%); }
.tab:nth-child(2) .ttl { -webkit-mask-image: none; mask-image: none; }
.tab:nth-child(7) .ttl { width: 37px; }
.audio { width: 12px; height: 12px; margin-left: 5px; margin-right: 5px; }
.close { width: 10px; height: 10px; margin-left: 6px; }
.plus { width: 12px; height: 12px; margin-left: 15px; }
.winctl { width: 184px; height: 34px; margin-left: auto; }
.toolbar { height: 42px; flex: none; background: #353535; display: flex; align-items: center; }
.nav { width: 100px; height: 34px; margin-right: 8px; }
.omnibox { width: 926px; height: 34px; border-radius: 17px; background: #202124; display: flex; align-items: center; padding: 0 10px; font-size: 14px; }
.i16 { width: 16px; height: 16px; }
.scheme { color: #8c9196; margin-left: 8px; width: 54px; border-right: 1px solid #62656a; line-height: 16px; letter-spacing: -.4px; }
.url { margin-left: 10px; white-space: nowrap; letter-spacing: -.345px; }
.share { margin-left: auto; margin-right: 16px; }
.exts { display: flex; gap: 16px; margin-left: 14px; }
.exts svg { width: 16px; height: 16px; }
.avatar { width: 22px; height: 22px; border-radius: 50%; background: #0d8a78; margin-left: 13px; font-size: 12px; line-height: 22px; text-align: center; }
.dots { width: 4px; height: 16px; margin-left: 19px; }
.viewer { height: 652px; background: #525659; border-top: 1px solid #6c6c6c; display: flex; flex-direction: column; }
.pdfbar { height: 56px; flex: none; background: #323639; box-shadow: 0 1px 4px #0009; z-index: 1; display: flex; align-items: center; padding: 0 32px 0 26px; }
.pdfname { margin-left: 26px; font-weight: 700; font-size: 14px; letter-spacing: -.5px; }
.disc { width: 35px; height: 35px; border-radius: 50%; background: #424649; margin-left: 15px; display: flex; align-items: center; justify-content: center; }
.disc svg { width: 18px; height: 18px; }
.pdfbar .dots { margin-left: 20px; }
.pdfbody { flex: 1; min-height: 0; display: flex; }
.thumbs { width: 283px; background: #323639; display: flex; flex-direction: column; align-items: center; padding-top: 18px; overflow: hidden; }
.thumb { width: 108px; height: 152px; background: #999b9c; flex: none; }
.thumb svg { width: 108px; height: 152px; }
.thumb.sel { width: 120px; height: 164px; border: 6px solid #8ab4f8; background: #fff; }
.ink { stroke: #333; stroke-width: .8; stroke-dasharray: 9 .3 5 .3 12 .4; fill: none; opacity: .7; }
.pg { flex: none; height: 49px; line-height: 38px; font-size: 14px; }
.sel + .pg { height: 43px; line-height: 26px; }
.sb { width: 17px; background: #f1f1f1; display: flex; flex-direction: column; align-items: center; padding: 6px 0; flex: none; }
.sb.left { justify-content: flex-end; }
.sb i, .psb i { width: 0; height: 0; border: 4px solid transparent; flex: none; }
i.up { border-top: 0 !important; border-bottom: 4px solid #505050 !important; }
i.down { border-bottom: 0 !important; border-top: 4px solid #505050 !important; }
.sb b { width: 13px; background: #c1c1c1; flex: none; }
.right b { height: 16px; margin-top: 24px; }
.canvas { flex: 1; display: flex; padding-left: 128px; }
.sheet { width: 793px; background: #fff; box-shadow: 0 0 6px #0008; }
.taskbar { height: 40px; background: #1e1e1e; display: flex; align-items: center; flex: none; z-index: 1; }
.sys { width: 48px; display: flex; justify-content: center; }
.sys.last { margin-right: 3px; }
.sys svg { width: 18px; height: 18px; }
.sys svg.big { width: 24px; height: 24px; }
.app { width: 49px; height: 40px; display: flex; justify-content: center; align-items: center; position: relative; }
.app svg { width: 26px; height: 26px; margin-right: 2px; }
.app.current { background: #4b4b4b; }
.app.run { background-image: linear-gradient(#76b9ed, #76b9ed); background-size: 40px 2px; background-repeat: no-repeat; background-position: bottom center; }
.app.current.run { background-size: 100% 2px; }
.bs { font: 10px Roboto, sans-serif; fill: #fff; }
.bk { font: bold 7px "Liberation Sans", sans-serif; fill: #222; }
.tray { width: 172px; height: 28px; }
.lang { width: 38px; text-align: center; font-size: 12px; letter-spacing: -.3px; margin-left: -7px; }
.clock { width: 70px; display: flex; flex-direction: column; align-items: center; font-size: 12px; line-height: 18px; letter-spacing: -.45px; }
.note { width: 18px; height: 18px; margin-left: 11px; }
.peek { width: 1px; height: 40px; background: #555; margin: 0 4px 0 19px; }
.dialog { position: absolute; z-index: 2; left: 185px; top: 73px; width: 998px; height: 630px; display: flex; background: #292a2d; box-shadow: 0 1px 5px #000b; }
.preview { width: 613px; display: flex; }
.pages { width: 597px; height: 630px; }
.doc { font: 5.2px "Liberation Sans", sans-serif; fill: #3a3a3a; }
.doc.b { font-weight: 700; fill: #222; }
.head { font: 600 7.5px "Open Sans", sans-serif; fill: #808080; }
.pn { font: bold 13px "Liberation Sans", sans-serif; fill: #fff; text-shadow: 1px 1px 1px #333; }
.prev { width: 16px; }
.prev b { height: 26px; margin-top: 208px; }
.panel { width: 385px; background: #292a2d; display: flex; flex-direction: column; color: #e8eaed; letter-spacing: -.32px; }
.phead { height: 57px; flex: none; display: flex; justify-content: space-between; align-items: center; padding: 7px 24px 0 25px; }
.ptitle { font-size: 15.5px; letter-spacing: -.2px; }
.count { font-weight: 600; font-size: 12.5px; letter-spacing: -.22px; }
.pbody { height: 508px; display: flex; overflow: hidden; border-bottom: 1px solid #222326; }
.settings { width: 368px; }
.group { padding: 8px 0 0 25px; }
.group.first { padding-top: 0; margin-top: -18px; padding-bottom: 8px; border-bottom: 1px solid #414246; }
.row { height: 54px; display: flex; align-items: center; }
.lbl { width: 144px; }
.field { width: 175px; height: 32px; background: #1d1d1f; border-radius: 4px; display: flex; align-items: center; justify-content: space-between; padding: 0 8px; }
.field.small { width: 68px; }
.field i { border: 5px solid transparent; border-top-color: #9fa1a4; border-bottom: 0; margin-bottom: 2px; }
.more { height: 72px; display: flex; align-items: center; justify-content: space-between; padding: 0 30px 0 25px; }
.more svg { width: 12px; height: 12px; }
.system { padding: 21px 29px 0 25px; display: flex; justify-content: space-between; align-items: center; line-height: 17px; }
.system svg { width: 14px; height: 14px; margin-bottom: 2px; }
.psb { width: 17px; background: #424242; display: flex; flex-direction: column; align-items: center; padding: 6px 0; }
.psb b { width: 13px; height: 413px; margin-top: 68px; background: #686868; flex: none; }
.psb i.up { border-bottom-color: #fff !important; }
.psb i.down { border-top-color: #fff !important; margin-top: 7px; }
.pfoot { flex: 1; display: flex; justify-content: flex-end; align-items: center; gap: 8px; padding-right: 16px; }
button { width: 84px; height: 32px; border-radius: 4px; font: 600 12.5px "Open Sans", sans-serif; padding: 0; letter-spacing: -.1px; }
.go { background: #8ab4f8; color: #202124; border: 0; font-weight: 400; }
.cancel { background: none; color: #8ab4f8; border: 1px solid #5f6368; }
</style>
